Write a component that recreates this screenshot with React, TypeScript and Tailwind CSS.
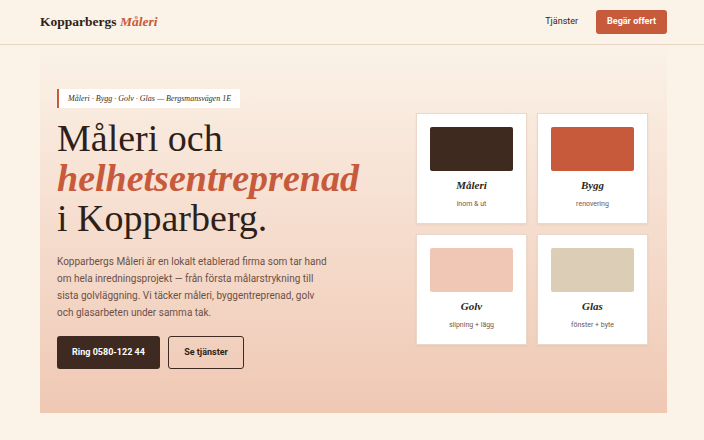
import React from "react";

const serif = { fontFamily: '"Liberation Serif", "DejaVu Serif", serif' };
const sans = { fontFamily: 'Roboto, Inter, "Noto Sans", sans-serif' };

const services = [
  { title: "Måleri", sub: "inom & ut", color: "bg-[#3f2a20]" },
  { title: "Bygg", sub: "renovering", color: "bg-[#c85a3c]" },
  { title: "Golv", sub: "slipning + lägg", color: "bg-[#f0c6b5]" },
  { title: "Glas", sub: "fönster + byte", color: "bg-[#dccdb6]" },
];

export default function App() {
  return (
    <div className="min-h-[440px] w-full bg-[#fbf3e8] text-[#2e1f18]" style={sans}>
      <header className="ml-10 mr-[37px] flex h-[44px] items-center justify-between">
        <div className="text-[13.5px] font-bold" style={serif}>
          Kopparbergs <span className="italic text-[#c85a3c]">Måleri</span>
        </div>
        <nav className="flex items-center gap-[18px] text-[9px]">
          <span className="text-[#2e1f18]">Tjänster</span>
          <span className="rounded-[3px] bg-[#c85a3c] px-[11px] py-[5px] font-bold text-white">Begär offert</span>
        </nav>
      </header>
      <div className="border-b border-[#e5d6c6]" />

      <section className="ml-10 mr-[37px] flex items-center justify-between bg-gradient-to-b from-[#fbf2e8] to-[#efc8b4] pl-[17px] pr-[19px] pt-[44px] pb-[44px]">
        <div className="w-[320px]">
          <div className="w-fit border-l-2 border-[#c85a3c] bg-white px-[9px] py-[4px] text-[8px] leading-[11px] italic text-[#3a2a22]" style={serif}>
            Måleri · Bygg · Golv · Glas — Bergsmansvägen 1E
          </div>
          <h1 className="mt-[10px] text-[38px] leading-[40px] text-[#2e1f18]" style={serif}>
            Måleri och
            <br />
            <em className="font-bold text-[#c85a3c]">helhetsentreprenad</em>
            <br />
            i Kopparberg.
          </h1>
          <p className="mt-[15px] w-[300px] text-[10px] leading-[17px] text-[#6d5046]">
            Kopparbergs Måleri är en lokalt etablerad firma som tar hand
            <br />
            om hela inredningsprojekt — från första målarstrykning till
            <br />
            sista golvläggning. Vi täcker måleri, byggentreprenad, golv
            <br />
            och glasarbeten under samma tak.
          </p>
          <div className="mt-[15px] flex gap-2">
            <span className="flex h-[33px] w-[103px] items-center justify-center rounded-[3px] bg-[#3e2a20] text-[9px] font-bold text-white">
              Ring 0580-122 44
            </span>
            <span className="flex h-[33px] w-[76px] items-center justify-center rounded-[3px] border border-[#3e2a20] text-[9px] font-bold text-[#2e1f18]">
              Se tjänster
            </span>
          </div>
        </div>

        <div className="grid grid-cols-[111px_111px] gap-[10px]">
          {services.map((s) => (
            <div key={s.title} className="flex h-[111px] flex-col items-center border border-[#ead8cb] bg-white px-[13px] pt-[13px] shadow-[0_1px_2px_rgba(120,70,40,0.08)]">
              <div className={`h-[44px] w-full rounded-[2px] ${s.color}`} />
              <div className="mt-[6px] text-[11px] font-bold italic text-[#2e1f18]" style={serif}>
                {s.title}
              </div>
              <div className="mt-[5px] text-[7px] text-[#6b5a52]">{s.sub}</div>
            </div>
          ))}
        </div>
      </section>
    </div>
  );
}
